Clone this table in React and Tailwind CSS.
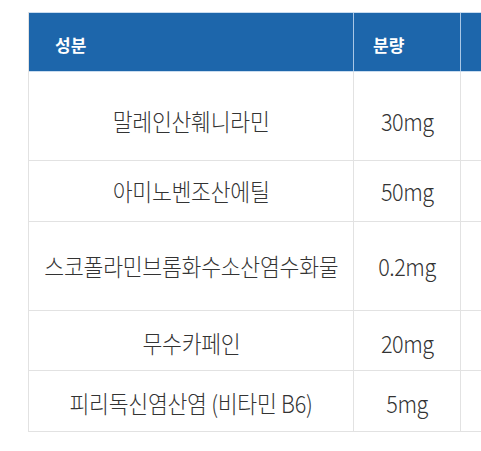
import React from "react";

const rows = [
  { name: "말레인산훼니라민", amount: "30mg", h: "h-[89px]", pad: "pt-[10px]" },
  { name: "아미노벤조산에틸", amount: "50mg", h: "h-[61px]", pad: "" },
  { name: "스코폴라민브롬화수소산염수화물", amount: "0.2mg", h: "h-[89px]", pad: "" },
  { name: "무수카페인", amount: "20mg", h: "h-[60px]", pad: "pt-[4px]" },
  { name: "피리독신염산염 (비타민 B6)", amount: "5mg", h: "h-[61px]", pad: "pt-[4px]" },
];

export default function App() {
  return (
    <div
      className="w-[481px] h-[451px] bg-white overflow-hidden pt-[12px] pl-[28px]"
      style={{ fontFamily: '"Noto Sans CJK KR", "Noto Sans", sans-serif' }}
    >
      <div className="w-[600px] border-l border-[#e2e2e2]">
        {/* header */}
        <div className="flex h-[60px] bg-[#1d66ab] border-t border-b border-[#c9dcef] text-white font-bold text-[17px]">
          <div className="w-[325px] border-r border-[#a9c7e6] flex items-center pl-[26px] pt-[6px]">
            성분
          </div>
          <div className="w-[107px] border-r border-[#a9c7e6] flex items-center pl-[19px] pt-[6px]">
            분량
          </div>
          <div className="flex-1" />
        </div>

        {rows.map((r) => (
          <div
            key={r.name}
            className={`flex ${r.h} border-b border-[#e2e2e2] text-[#333] text-[24px] font-light leading-none`}
          >
            <div className={`w-[325px] border-r border-[#e2e2e2] flex items-center justify-center ${r.pad}`}>
              <span className="inline-block whitespace-nowrap scale-x-[0.9] tracking-[-0.3px]">{r.name}</span>
            </div>
            <div className={`w-[107px] border-r border-[#e2e2e2] flex items-center justify-center ${r.pad}`}>
              <span className="inline-block whitespace-nowrap scale-x-[0.9] tracking-[-0.5px]">{r.amount}</span>
            </div>
            <div className="flex-1" />
          </div>
        ))}
      </div>
    </div>
  );
}
